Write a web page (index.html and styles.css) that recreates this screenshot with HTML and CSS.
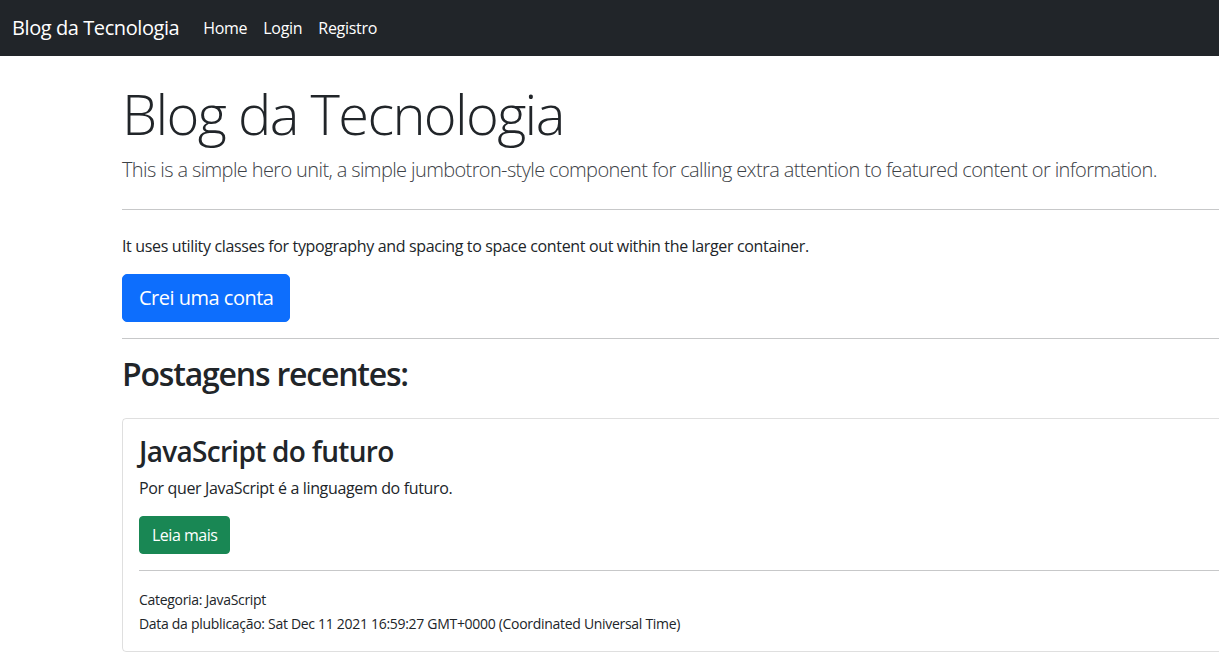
FILE: index.html
```html
<!DOCTYPE html>
<html lang="pt-br">
<head>
<meta charset="utf-8">
<title>Blog da Tecnologia</title>
<link rel="stylesheet" href="styles.css">
</head>
<body>
<nav class="navbar">
  <a class="brand" href="#">Blog da Tecnologia</a>
  <ul class="nav">
    <li><a class="nav-link" href="#">Home</a></li>
    <li><a class="nav-link" href="#">Login</a></li>
    <li><a class="nav-link" href="#">Registro</a></li>
  </ul>
</nav>
<main class="container">
  <section class="hero">
    <h1 class="display">Blog da Tecnologia</h1>
    <p class="lead">This is a simple hero unit, a simple jumbotron-style component for calling extra attention to featured content or information.</p>
    <hr class="rule-lg">
    <p>It uses utility classes for typography and spacing to space content out within the larger container.</p>
    <a class="btn btn-primary btn-lg" href="#">Crei uma conta</a>
  </section>
  <hr class="rule">
  <h2 class="section-title">Postagens recentes:</h2>
  <article class="card">
    <div class="card-body">
      <h3 class="card-title">JavaScript do futuro</h3>
      <p>Por quer JavaScript é a linguagem do futuro.</p>
      <a class="btn btn-success" href="#">Leia mais</a>
      <hr class="rule">
      <p class="meta"><small>Categoria: JavaScript</small><br><small>Data da plublicação: Sat Dec 11 2021 16:59:27 GMT+0000 (Coordinated Universal Time)</small></p>
    </div>
  </article>
</main>
</body>
</html>
```
FILE: styles.css
```css
* { box-sizing: border-box; }
html, body { margin: 0; padding: 0; }
body {
  font-family: "Open Sans", "Noto Sans", sans-serif;
  font-size: 16px;
  line-height: 1.5;
  color: #212529;
  background: #fff;
  overflow: hidden;
  width: 1219px;
  height: 662px;
}
a { text-decoration: none; }

.navbar {
  background: #212529;
  height: 56px;
  display: flex;
  align-items: center;
  padding: 0 12px;
}
.brand {
  color: #fff;
  font-size: 20px;
  line-height: 30px;
  margin-right: 16px;
  letter-spacing: -0.42px;
}
.nav {
  display: flex;
  list-style: none;
  margin: 0;
  padding: 0;
}
.nav-link {
  display: block;
  color: #fff;
  padding: 8px;
  letter-spacing: -0.3px;
}

.container {
  width: 1320px;
  margin-left: 110px;
  padding: 24px 12px 0;
}
.display {
  font-size: 56px;
  font-weight: 300;
  line-height: 1.2;
  margin: 0 0 8px;
  letter-spacing: -1.65px;
}
.lead {
  font-size: 20px;
  font-weight: 300;
  margin: 0 0 16px;
  color: #3d4247;
  letter-spacing: -0.62px;
}
.hero p { margin-top: 0; margin-bottom: 16px; }
p { letter-spacing: -0.35px; }
hr {
  border: 0;
  border-top: 1px solid #212529;
  opacity: .25;
  height: 0;
}
.rule-lg { margin: 24px 0; }
.rule { margin: 16px 0; }

.btn {
  display: inline-block;
  color: #fff;
  border: 1px solid transparent;
  border-radius: 4px;
  font-size: 16px;
  line-height: 24px;
  padding: 6px 12px;
  letter-spacing: -0.5px;
}
.btn-lg {
  font-size: 20px;
  line-height: 30px;
  padding: 8px 16px;
  border-radius: 5px;
}
.btn-primary { background: #0d6efd; border-color: #0d6efd; }
.btn-success { background: #198754; border-color: #198754; }

.section-title {
  font-size: 32px;
  font-weight: 600;
  line-height: 1.2;
  margin: 0 0 24px;
  letter-spacing: -1.2px;
}
.card {
  border: 1px solid rgba(0,0,0,.125);
  border-radius: 4px;
}
.card-body { padding: 16px; }
.card-title {
  font-size: 28px;
  font-weight: 600;
  line-height: 1.2;
  margin: 0 0 8px;
  letter-spacing: -0.7px;
}
.card-body p { margin: 0 0 16px; }
.card-body .meta { margin: 0; }
small { font-size: 14px; letter-spacing: -0.3px; }
```
